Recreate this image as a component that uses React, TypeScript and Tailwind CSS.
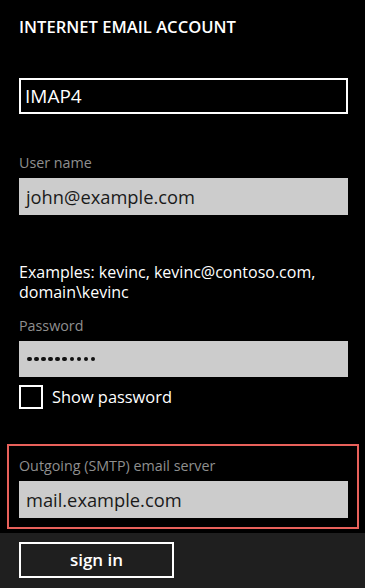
// Windows Phone style "Internet email account" setup page.

const FONT = { fontFamily: '"Open Sans", "Noto Sans", sans-serif' };

function Label({ children }: { children: string }) {
  return <div className="h-[20px] text-[14.3px] leading-[20px] text-[#8f8f8f]">{children}</div>;
}

function Field({ value }: { value: string }) {
  return (
    <div className="mt-[5px] flex h-[37px] w-[329px] items-center bg-[#cccccc] pl-[7px] text-[18.3px] text-[#1a1a1a]">
      {value}
    </div>
  );
}

function PasswordField({ length }: { length: number }) {
  return (
    <div className="mt-[5px] flex h-[36px] w-[329px] items-center gap-[2.6px] bg-[#cccccc] pl-[8px]">
      {Array.from({ length }, (_, i) => (
        <span key={i} className="h-[4.5px] w-[4.5px] rounded-full bg-[#111]" />
      ))}
    </div>
  );
}

export default function App() {
  return (
    <div
      className="flex h-[588px] w-[365px] flex-col overflow-hidden bg-black text-white"
      style={FONT}
    >
      <div className="px-[19px]">
        <h1 className="mt-[17px] h-[20px] text-[16.6px] font-semibold leading-[20px]">
          INTERNET EMAIL ACCOUNT
        </h1>

        <div className="mt-[41px] flex h-[36px] w-[329px] items-center border-2 border-white pl-[4px] text-[19px]">
          IMAP4
        </div>

        <div className="mt-[39px]">
          <Label>User name</Label>
          <Field value="john@example.com" />
        </div>

        <p className="mt-[47px] text-[16px] leading-[20px]">
          Examples: kevinc, kevinc@contoso.com,
          <br />
          domain\kevinc
        </p>

        <div className="mt-[14px]">
          <Label>Password</Label>
          <PasswordField length={10} />
        </div>

        <label className="mt-[8px] flex h-[24px] items-center gap-[9px]">
          <span className="h-[24px] w-[24px] border-2 border-white" />
          <span className="text-[16.4px]">Show password</span>
        </label>
      </div>

      {/* highlighted section */}
      <div className="ml-[7px] mt-[35px] w-[352px] border-2 border-[#e8615b] pb-[9px] pl-[10px] pt-[10px]">
        <Label>Outgoing (SMTP) email server</Label>
        <Field value="mail.example.com" />
      </div>

      <div className="mt-auto h-[55px] bg-[#1f1f1f] px-[19px] pt-[9px]">
        <button className="flex h-[36px] w-[155px] items-center justify-center border-2 border-white text-[17px] font-semibold">
          sign in
        </button>
      </div>
    </div>
  );
}
